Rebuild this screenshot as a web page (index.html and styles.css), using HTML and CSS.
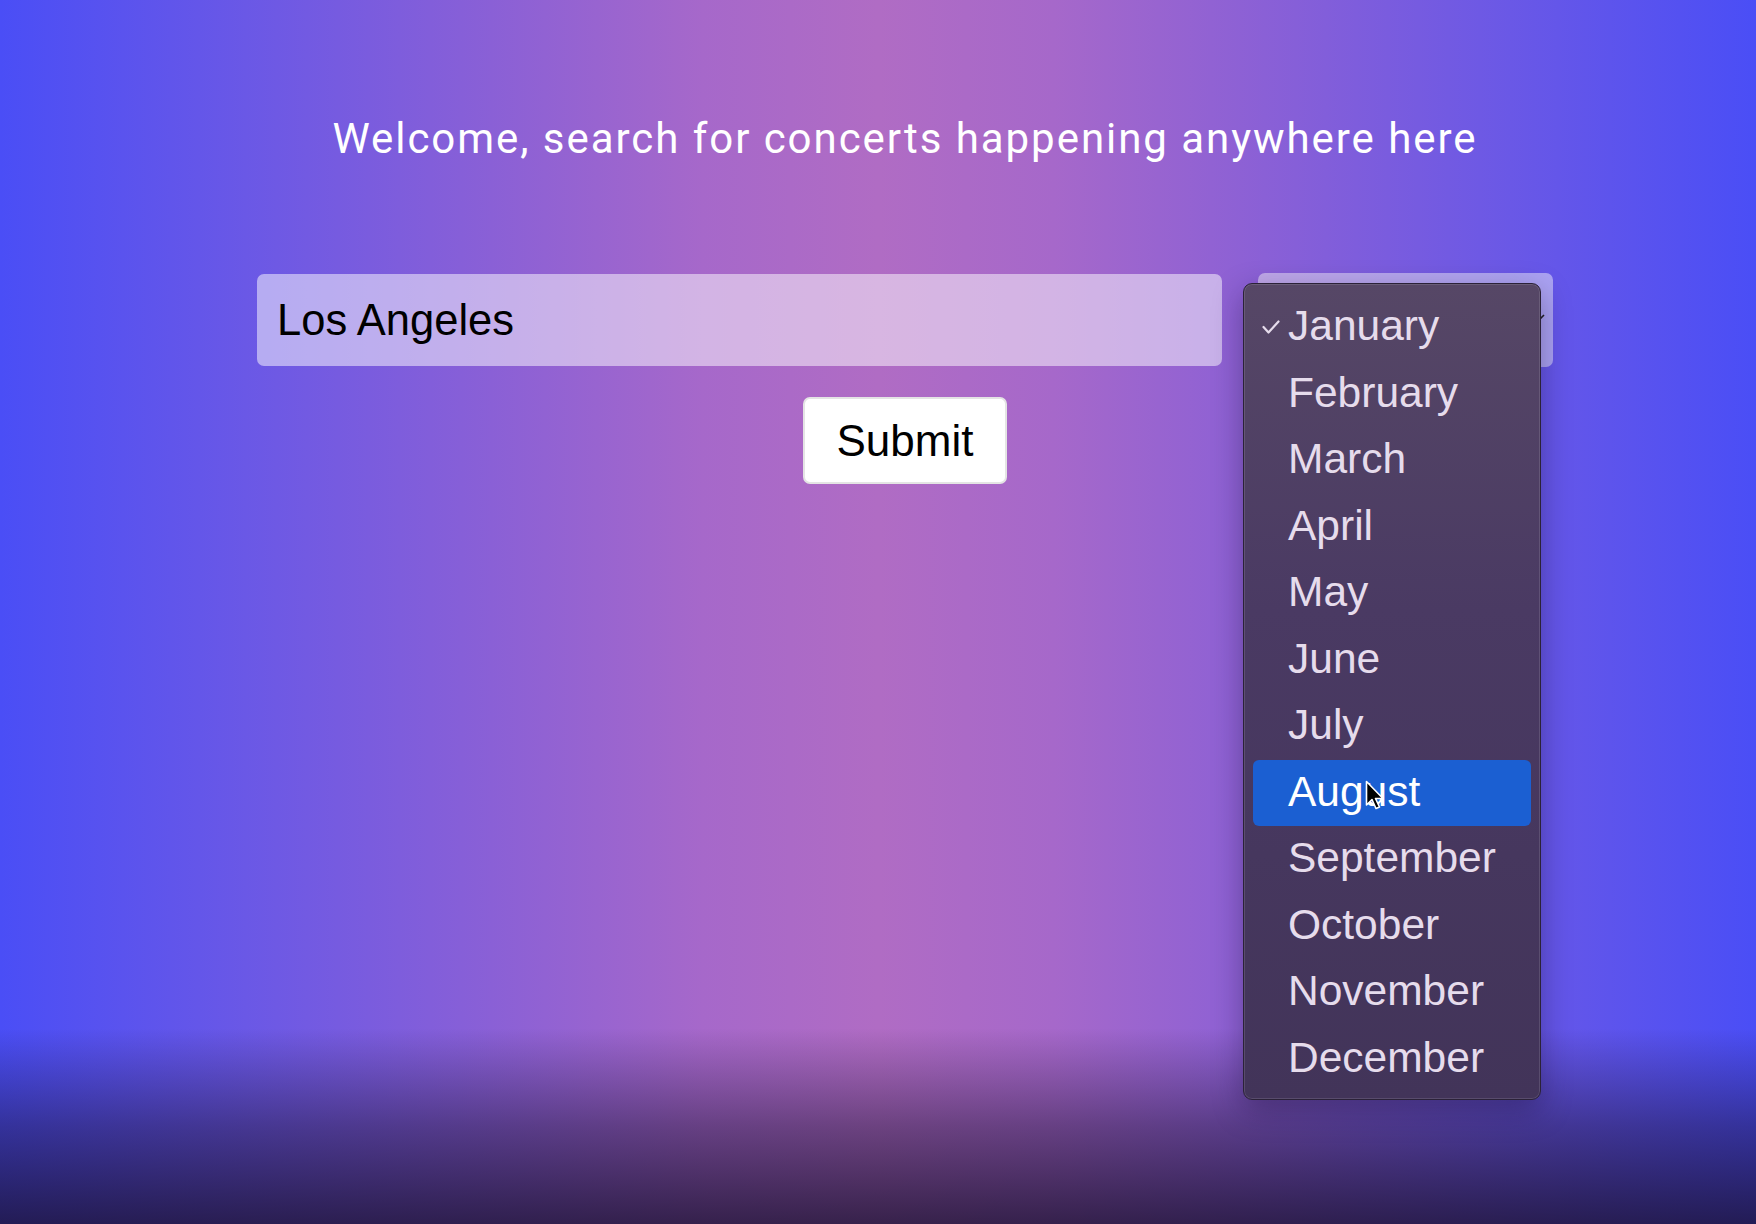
FILE: index.html
```html
<!DOCTYPE html>
<html lang="en">
<head>
<meta charset="utf-8">
<title>Concert search</title>
<link rel="stylesheet" href="styles.css">
</head>
<body>
<main class="page">
  <div class="content">
    <h1 class="title">Welcome, search for concerts happening anywhere here</h1>
    <form class="search" onsubmit="return false">
      <div class="row">
        <input class="city" type="text" value="Los Angeles">
        <div class="select-wrap">
          <div class="select">
            <svg class="chev" viewBox="0 0 14 8" width="14" height="8"><polyline points="1,1 7,7 13,1" fill="none" stroke="#222" stroke-width="1.6"/></svg>
          </div>
          <ul class="menu">
            <li class="opt checked"><svg class="check" viewBox="0 0 18 14" width="18" height="14"><polyline points="1.5,7 6.5,12.5 16.5,1.5" fill="none" stroke="#e6dcec" stroke-width="2.2" stroke-linecap="round" stroke-linejoin="round"/></svg>January</li>
            <li class="opt">February</li>
            <li class="opt">March</li>
            <li class="opt">April</li>
            <li class="opt">May</li>
            <li class="opt">June</li>
            <li class="opt">July</li>
            <li class="opt active">August</li>
            <li class="opt">September</li>
            <li class="opt">October</li>
            <li class="opt">November</li>
            <li class="opt">December</li>
            <svg class="cursor" viewBox="0 0 20 31" width="20" height="31"><path d="M1.5 1.5 L1.5 25 L7 19.5 L11 28.5 L14.5 27 L10.5 18.5 L18 18.5 Z" fill="#000" stroke="#fff" stroke-width="1.6" stroke-linejoin="round"/></svg>
          </ul>
        </div>
      </div>
      <button class="submit" type="submit">Submit</button>
    </form>
  </div>
</main>
</body>
</html>
```

FILE: styles.css
```css
html, body {
  margin: 0;
  padding: 0;
  height: 100%;
}

body {
  font-family: "Liberation Sans", Arial, sans-serif;
  overflow: hidden;
}

.page {
  height: 1224px;
  background:
    linear-gradient(to bottom, rgba(25, 15, 45, 0) 84%, rgba(25, 15, 45, 0.45) 92%, rgba(25, 15, 45, 0.8) 100%),
    linear-gradient(90deg, #4a4ef6 0%, #6a58e6 14%, #8a60d6 28%, #a668ca 40%, #b06cc4 50%, #a668ca 60%, #8a60d6 72%, #6a58e6 86%, #4a4ef6 100%);
}

.content {
  margin-left: 257px;
  width: 1296px;
  padding-top: 114px;
  display: flex;
  flex-direction: column;
  align-items: center;
}

.title {
  margin: 0;
  font-family: Roboto, "Liberation Sans", sans-serif;
  font-weight: 400;
  font-size: 42px;
  line-height: 50px;
  color: #ffffff;
  text-align: center;
  letter-spacing: 1.95px;
  white-space: nowrap;
}

.search {
  margin-top: 109px;
  width: 100%;
  display: flex;
  flex-direction: column;
  align-items: center;
}

.row {
  width: 100%;
  display: flex;
  gap: 36px;
  align-items: flex-start;
}

.city {
  box-sizing: border-box;
  width: 965px;
  height: 92px;
  margin-top: 1px;
  padding: 0 20px;
  border: none;
  border-radius: 7px;
  background: rgba(255, 255, 255, 0.5);
  font-family: "Liberation Sans", Arial, sans-serif;
  font-size: 43.5px;
  color: #000;
  outline: none;
}

.select-wrap {
  position: relative;
  width: 295px;
}

.select {
  box-sizing: border-box;
  height: 94px;
  border-radius: 7px;
  background: rgba(255, 255, 255, 0.45);
  display: flex;
  align-items: center;
  justify-content: flex-end;
  padding-right: 8px;
}

.chev {
  display: block;
  margin-top: -4px;
}

.menu {
  position: absolute;
  left: -15px;
  top: 10px;
  box-sizing: border-box;
  width: 298px;
  margin: 0;
  padding: 10px 9px 7px;
  list-style: none;
  border-radius: 9px;
  border: 1px solid #2b2238;
  background: linear-gradient(to bottom, #564766 0%, #4a3a63 40%, #423459 100%);
  box-shadow: inset 0 0 0 1px rgba(255, 255, 255, 0.12), 0 10px 30px rgba(20, 10, 40, 0.35);
}

.opt {
  position: relative;
  height: 66.5px;
  line-height: 64px;
  padding-left: 35px;
  border-radius: 6px;
  font-family: "Liberation Sans", Arial, sans-serif;
  font-size: 42.5px;
  color: #e6dcec;
  white-space: nowrap;
}

.opt.active {
  background: #1b5fd2;
  color: #ffffff;
}

.check {
  position: absolute;
  left: 9px;
  top: 26px;
}

.cursor {
  position: absolute;
  left: 121px;
  top: 496px;
}

.submit {
  margin-top: 30px;
  box-sizing: border-box;
  width: 204px;
  height: 87px;
  border: 2px solid #e4e4e4;
  border-radius: 7px;
  background: #ffffff;
  font-family: "Liberation Sans", Arial, sans-serif;
  font-size: 44px;
  color: #000;
  padding: 0;
}
```
